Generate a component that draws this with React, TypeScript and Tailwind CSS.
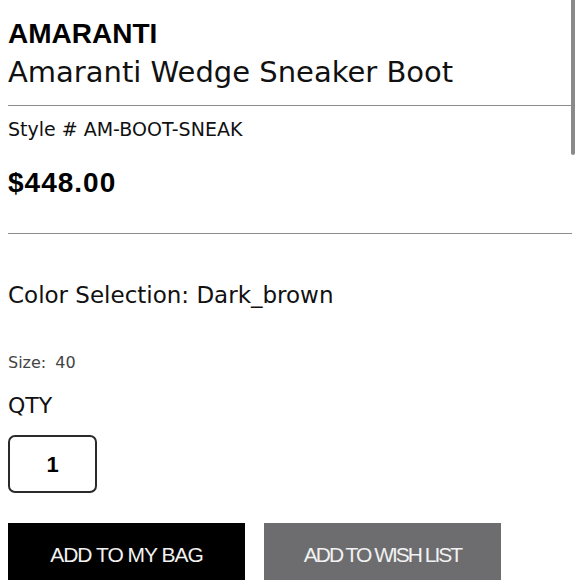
import React from "react";

export default function App() {
  return (
    <div className="relative w-[580px] h-[580px] overflow-hidden bg-white px-2 pt-5 text-[#111] font-['DejaVu_Sans',sans-serif]">
      <div className="absolute right-[5px] top-0 w-[4px] h-[155px] rounded-b-full bg-[#8a8a8a]" />
      <div className="font-['Liberation_Sans',Arial,sans-serif] text-[28px] leading-[28px] font-bold text-black">AMARANTI</div>
      <div className="mt-[10px] text-[29px] leading-[29px]">Amaranti Wedge Sneaker Boot</div>
      <div className="mt-[18px] h-px bg-[#8c8c8c]" />
      <div className="mt-[14px] text-[19px] leading-[19px]">Style # AM-BOOT-SNEAK</div>
      <div className="mt-[30px] font-['Liberation_Sans',Arial,sans-serif] text-[28px] leading-[28px] font-bold tracking-[1px] text-black">$448.00</div>
      <div className="mt-[36px] h-px bg-[#8c8c8c]" />
      <div className="mt-[50px] text-[23px] leading-[23px]">Color Selection: Dark_brown</div>
      <div className="mt-[48px] text-[16px] leading-[16px] text-[#444]">
        Size:<span className="ml-[9px]">40</span>
      </div>
      <div className="mt-[24px] text-[22px] leading-[22px]">QTY</div>
      <div className="mt-[18px] w-[89px] h-[58px] rounded-[7px] border-2 border-[#2a2a2a] flex items-center justify-center">
        <span className="font-['Liberation_Sans',Arial,sans-serif] text-[22px] font-bold text-black">1</span>
      </div>
      <div className="mt-[30px] flex gap-[19px] font-['Liberation_Sans',Arial,sans-serif] text-[21px] text-[#f2f2f2]">
        <button className="w-[237px] h-[64px] bg-black tracking-[-1px] flex items-center justify-center">
          ADD TO MY BAG
        </button>
        <button className="w-[237px] h-[64px] bg-[#6d6d70] tracking-[-2px] flex items-center justify-center">
          ADD TO WISH LIST
        </button>
      </div>
    </div>
  );
}
